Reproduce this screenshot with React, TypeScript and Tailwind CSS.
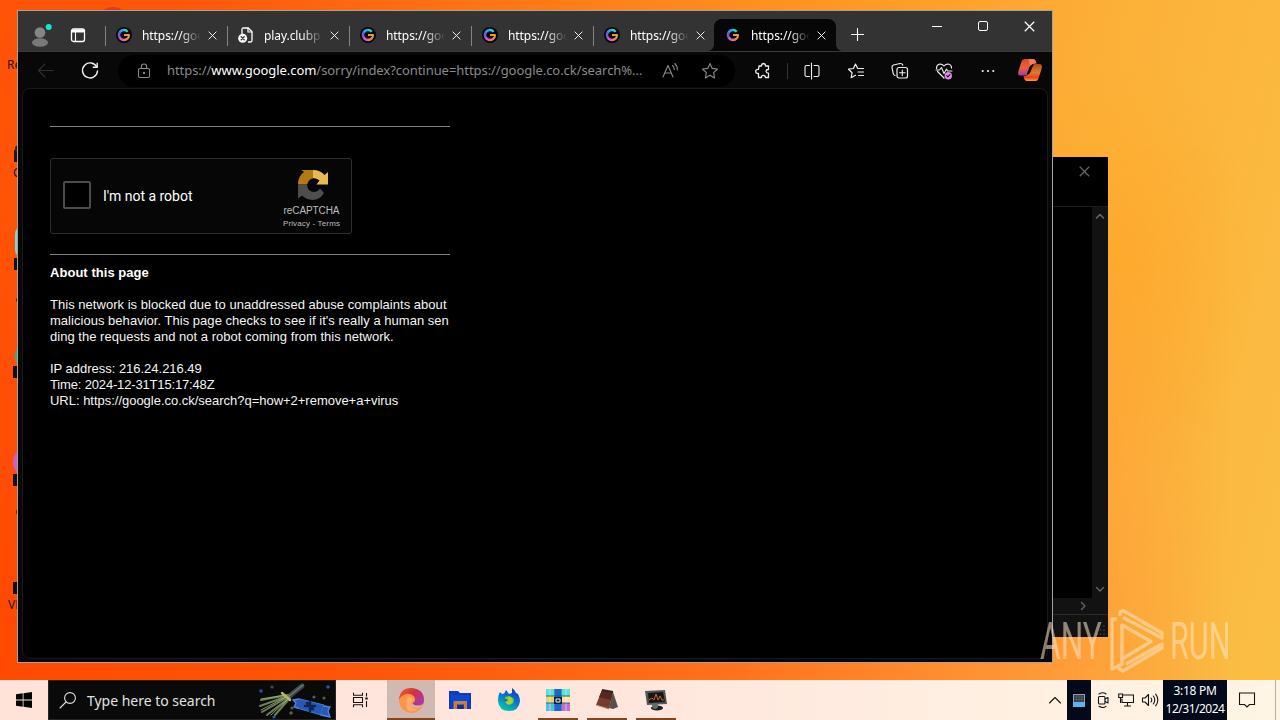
import type { ReactNode } from "react";
import clsx from "clsx";

const tabs = [
  { title: "https://goo", icon: "google" },
  { title: "play.clubp", icon: "file" },
  { title: "https://goo", icon: "google" },
  { title: "https://goo", icon: "google" },
  { title: "https://goo", icon: "google" },
];

function Icon({ size = 20, className, children }: { size?: number; className?: string; children: ReactNode }) {
  return (
    <svg
      width={size}
      height={size}
      viewBox={`0 0 ${size} ${size}`}
      fill="none"
      stroke="currentColor"
      strokeWidth="1.1"
      strokeLinecap="round"
      strokeLinejoin="round"
      className={clsx("shrink-0", className)}
    >
      {children}
    </svg>
  );
}

function GoogleIcon() {
  return (
    <Icon size={16}>
      <circle cx="8" cy="8" r="8" fill="#08060d" stroke="none" />
      <g strokeWidth="2.4" strokeLinecap="butt">
        <path d="M3.6 5.6A5 5 0 0 1 8 3" stroke="#2f9ff0" />
        <path d="M7.8 3a5 5 0 0 1 3.9 1.7" stroke="#35cfc4" />
        <path d="M3.7 10.5A5 5 0 0 1 3.7 5.4" stroke="#6a62dc" />
        <path d="M8.2 13A5 5 0 0 1 3.6 10.2" stroke="#dc5fc0" />
        <path d="M11.5 11.6A5 5 0 0 1 8 13" stroke="#ee7d6a" />
        <path d="M8 8h5a5 5 0 0 1-1.7 3.8" stroke="#e99a32" strokeWidth="2.1" />
      </g>
    </Icon>
  );
}

function FileIcon() {
  return (
    <Icon size={16} className="text-white">
      <path d="M4 6.500V2.600Q4 1 5.500 1h4.800L14 4.800v8.700Q14 15 12.500 15H10.500" strokeWidth="1.300" />
      <path d="M10 1.200V5h3.800" strokeWidth="1.200" />
      <circle cx="4.700" cy="11.200" r="4.500" fill="white" stroke="none" />
      <path d="M3.200 9.700l3 3m0-3l-3 3" stroke="#333" strokeWidth="1.300" />
    </Icon>
  );
}

function CloseIcon({ size = 10 }: { size?: number }) {
  return (
    <svg width={size} height={size} viewBox="0 0 10 10" stroke="currentColor" strokeWidth="1.100" className="shrink-0">
      <path d="M.7.7l8.600 8.600M9.300.7L.7 9.300" />
    </svg>
  );
}

function Tab({ title, icon, active }: { title: string; icon: string; active?: boolean }) {
  return (
    <div
      className={clsx(
        "relative flex h-8 w-[122px] shrink-0 items-center pl-[11px]",
        active && "-ml-px rounded-t-lg bg-[#070707]"
      )}
    >
      {active ? (
        <>
          <span className="absolute bottom-0 -left-1.5 size-1.5 bg-[radial-gradient(circle_at_0_0,#333_5.500px,#070707_6px)]" />
          <span className="absolute bottom-0 -right-1.5 size-1.5 bg-[radial-gradient(circle_at_100%_0,#333_5.500px,#070707_6px)]" />
        </>
      ) : (
        <span className="absolute left-0 top-[7px] h-5 w-px bg-[#858585]" />
      )}
      {icon === "google" ? <GoogleIcon /> : <FileIcon />}
      <span className="mt-px ml-2.5 w-[62px] whitespace-nowrap text-[12px] tracking-[-0.08px] text-white mask-[linear-gradient(90deg,#000_62%,transparent_95%)]">
        {title}
      </span>
      <span className="ml-1 flex text-[#eee]">
        <CloseIcon size={9} />
      </span>
    </div>
  );
}

function TabBar() {
  return (
    <div className="flex h-10 items-start bg-[#333]">
      <div className="flex h-10 w-[87px] items-center pt-2">
        <svg width="24" height="26" viewBox="0 0 24 26" className="-mt-[3px] ml-2.5">
          <circle cx="12" cy="11.500" r="5.300" fill="#858585" />
          <ellipse cx="12" cy="21.500" rx="8" ry="4.300" fill="#797979" />
          <circle cx="20.700" cy="6" r="3" fill="#12e6d2" />
        </svg>
        <Icon size={16} className="ml-[18px] text-white">
          <rect x="1.500" y="2" width="13" height="12.500" rx="2" strokeWidth="1.300" />
          <path d="M2 4h12" strokeWidth="3" strokeLinecap="butt" />
          <path d="M5.500 5v9" />
        </Icon>
      </div>
      <div className="flex pt-2">
        {tabs.map((tab, i) => (
          <Tab key={i} {...tab} />
        ))}
        <Tab title="https://goo" icon="google" active />
      </div>
      <div className="flex h-10 w-[42px] items-center justify-center pt-2 text-white">
        <Icon size={13} className="-mt-px">
          <path d="M6.500 .5v12M.5 6.500h12" />
        </Icon>
      </div>
      <div className="ml-auto flex h-[30px] text-white">
        <span className="flex w-[46px] items-center justify-center">
          <span className="h-px w-2.5 bg-white" />
        </span>
        <span className="flex w-[46px] items-center justify-center">
          <span className="size-2.5 rounded-[2px] border border-white" />
        </span>
        <span className="flex w-[46px] items-center justify-center">
          <CloseIcon size={11} />
        </span>
      </div>
    </div>
  );
}

function ToolButton({ className, children }: { className?: string; children: ReactNode }) {
  return <div className={clsx("flex w-11 shrink-0 justify-center text-[#eee]", className)}>{children}</div>;
}

const starPath = "M10 2.500l2.200 4.900 5.300.6-3.900 3.600 1 5.300L10 14.300l-4.600 2.600 1-5.300L2.500 8l5.300-.6z";

function Toolbar() {
  return (
    <div className="flex h-[37px] items-center border-t border-[#3a3a3a] bg-[#080808] pt-px">
      <ToolButton className="ml-1.5">
        <Icon className="text-[#303030]">
          <path d="M17.500 9.500H2.500M9 3L2.500 9.500 9 16" />
        </Icon>
      </ToolButton>
      <ToolButton>
        <Icon>
          <path d="M16.800 6.200A7.500 7.500 0 1 0 17.500 10" strokeWidth="1.400" />
          <path d="M17.200 2.300v4h-4" strokeWidth="1.400" />
        </Icon>
      </ToolButton>
      <div className="ml-1.5 flex h-8 w-[617px] shrink-0 items-center rounded-full bg-black text-[#8b8b8b]">
        <Icon size={16} className="ml-[18px]">
          <rect x="2.500" y="5.500" width="11" height="9" rx="1.500" />
          <path d="M5.300 5.500V3.700a2.700 2.700 0 0 1 5.400 0v1.800" />
          <circle cx="8" cy="10" r=".6" fill="currentColor" />
        </Icon>
        <span className="ml-[15px] w-[480px] whitespace-nowrap text-[13px] tracking-[-0.055px]">
          https://<span className="text-white">www.google.com</span>/sorry/index?continue=https://google.co.ck/search%...
        </span>
        <Icon size={18} className="ml-[14px]">
          <path d="M2 15L7 3.500 12 15M3.800 11h6.400M11.500 3.500q1.800 1.500 1.800 4M13.800 1.500q2.700 2.500 2.500 6.500" />
        </Icon>
        <Icon size={19} className="ml-[21px]">
          <path d={starPath} />
        </Icon>
      </div>
      <ToolButton className="ml-1.5">
        <Icon size={18}>
          <path
            d="M5 4h2.500Q7.300 1.700 9.500 1.500 11.700 1.700 11.500 4h3v3.500Q12.200 7.300 12 9.300q.2 2 2.500 1.900v4.300h-3Q11.300 13.300 9.300 13.300T7.500 15.500H4.500v-4Q1.700 11.500 1.700 9.400T4.500 7.300z"
            strokeWidth="1.300"
          />
        </Icon>
      </ToolButton>
      <span className="ml-0.5 h-4 w-px bg-[#333]" />
      <ToolButton className="ml-0.5">
        <Icon size={18}>
          <path d="M6.500 3.500h-3Q2 3.500 2 5v8q0 1.500 1.500 1.500h3M11 3.500h3.500Q16 3.500 16 5v8q0 1.500-1.500 1.500H11M8.500 1v16" />
        </Icon>
      </ToolButton>
      <ToolButton>
        <Icon>
          <path d="M9.500 14.200l-4.300 2.500.9-5L2.500 8.200l4.900-.7L9.500 3l2.200 4.500H17.500M12 11h5.500M12.500 14.500h5" strokeWidth="1.200" />
        </Icon>
      </ToolButton>
      <ToolButton>
        <Icon size={18}>
          <rect x="6" y="5.500" width="10.500" height="10.500" rx="2" strokeWidth="1.200" />
          <path d="M11.300 8v5.600M8.500 10.800h5.600" />
          <path d="M4 13.500Q2.500 13 2.200 11.500L1 5.500Q1 3.500 2.500 3L9 1.500q2.200-.2 2.800 1.700" strokeWidth="1.200" />
        </Icon>
      </ToolButton>
      <ToolButton>
        <Icon>
          <path d="M10 17L3.500 10.500M2.500 7.500Q2.500 3.500 6 3q2.500 0 4 2 1.500-2 4-2 3.500.5 3.500 4" strokeWidth="1.200" />
          <path d="M2 9h3.500L7.500 6.500l2.500 6L12.500 8l1 2H18" strokeWidth="1.100" />
          <circle cx="14.300" cy="14.700" r="3.700" fill="#e38ae8" stroke="none" />
          <path d="M12.700 14.700l1.200 1.200 2-2.300" stroke="#111" />
        </Icon>
      </ToolButton>
      <ToolButton>
        <Icon size={14}>
          <g fill="currentColor" stroke="none">
            <circle cx="1.700" cy="7" r="1.100" />
            <circle cx="7" cy="7" r="1.100" />
            <circle cx="12.300" cy="7" r="1.100" />
          </g>
        </Icon>
      </ToolButton>
      <ToolButton className="-ml-0.5">
        <svg width="26" height="24" viewBox="0 0 26 24" className="-mt-px shrink-0">
          <defs>
            <linearGradient id="cpA" x1="0" y1="0" x2="0" y2="1">
              <stop offset="0" stopColor="#dd4526" />
              <stop offset=".5" stopColor="#f0603a" />
              <stop offset="1" stopColor="#a83c96" />
            </linearGradient>
            <linearGradient id="cpB" x1="0" y1="0" x2="0" y2="1">
              <stop offset="0" stopColor="#b0481c" />
              <stop offset=".5" stopColor="#dd7c2c" />
              <stop offset=".8" stopColor="#f0401c" />
              <stop offset="1" stopColor="#ffa030" />
            </linearGradient>
          </defs>
          <path d="M7.500 1H16q2 0 2.700 2l.8 2.500Q15 5 14 8l-3.500 8q-.7 2-3 1.500H4Q.3 18 1.300 13.500L4.500 3.500Q5.300 1 7.500 1z" fill="url(#cpA)" />
          <path d="M18 6h4q4 0 2.700 4.500l-3.200 10Q20.700 23 18.500 23H10q-2.500 0-3-3l-.4-1.700q4.400-.3 6-4.300l2.700-6Q16 6 18 6z" fill="url(#cpB)" />
          <path d="M11.500 1H16q2 0 2.700 2l.8 2.500Q15 5 14 8l-1 1.500z" fill="#ff9a76" opacity=".6" />
          <path d="M12.500 9Q13.500 6 16.500 6.500L13.500 14Q12.500 17 9.500 16.500z" fill="#080808" />
        </svg>
      </ToolButton>
    </div>
  );
}

function RecaptchaLogo() {
  return (
    <svg width="32" height="32" viewBox="0 0 32 32" className="ml-0.5">
      <path d="M1 15.500Q1 7 7 3L4.500 1H16v8.500q-4 0-6 6z" fill="#b27a10" />
      <path d="M16 1q7 0 11.500 5L31 3v12.500H19.500l3-4Q20 9 16 9z" fill="#e6bc4e" />
      <path d="M1 15.500h9q.5 7 6.500 7.500 4 0 6.500-3.500l4 4.500Q23 31 15.500 31 9 30.500 5 26.500L1 29.500z" fill="#4e4e4e" />
    </svg>
  );
}

function SorryPage() {
  return (
    <div className="mx-1 mb-[3px] flex-1 rounded-lg border border-[#1a1a1c] bg-black px-[27px] pt-[37px] font-['Liberation_Sans',Arial,sans-serif] text-[13px] leading-4 text-[#f4f4f4]">
      <div className="w-[400px]">
        <hr className="border-[#808080]" />
        <div className="mt-[31px] flex h-[76px] w-[302px] rounded-[3px] border border-[#2d2d2d] bg-[#060606]">
          <div className="mt-[22px] ml-3 size-7 rounded-[2px] border-2 border-[#4c4c4c] bg-black" />
          <span className="mt-[29px] ml-3 font-[Roboto,sans-serif] text-[14px] leading-[17px] tracking-[-0.02px] text-white">
            I'm not a robot
          </span>
          <div className="mt-[10px] ml-auto mr-[11px] flex w-[57px] flex-col items-center whitespace-nowrap text-[#bdbdbd]">
            <RecaptchaLogo />
            <span className="mt-1 text-[10px] leading-3 tracking-[-0.1px]">reCAPTCHA</span>
            <span className="mt-px text-[8px] leading-3 tracking-[0.15px]">Privacy - Terms</span>
          </div>
        </div>
        <hr className="mt-5 border-[#808080]" />
        <p className="mt-[10px] font-bold tracking-[0.04px] text-white">About this page</p>
        <div className="mt-4 whitespace-nowrap">
          <p className="tracking-[0.03px]">This network is blocked due to unaddressed abuse complaints about</p>
          <p className="tracking-[0.03px]">malicious behavior. This page checks to see if it's really a human sen</p>
          <p className="tracking-[0.02px]">ding the requests and not a robot coming from this network.</p>
        </div>
        <div className="mt-4 whitespace-nowrap">
          <p className="tracking-[-0.02px]">IP address: 216.24.216.49</p>
          <p className="tracking-[-0.16px]">Time: 2024-12-31T15:17:48Z</p>
          <p className="tracking-[-0.02px]">URL: https://google.co.ck/search?q=how+2+remove+a+virus</p>
        </div>
      </div>
    </div>
  );
}

function BackWindow() {
  return (
    <div className="absolute left-[1040px] top-[157px] flex h-[480px] w-[68px] flex-col bg-black text-[#666]">
      <div className="flex h-[50px] justify-end border-b border-[#1c1c1c] pt-[9px] pr-[18px]">
        <CloseIcon size={11} />
      </div>
      <div className="flex h-[391px] justify-end">
        <div className="flex w-4 flex-col items-center justify-between bg-[#121212] pt-1 pb-1">
          <Icon size={10} className="-ml-px">
            <path d="M1.500 7L5 3.500 8.500 7" strokeWidth="1.600" />
          </Icon>
          <Icon size={10} className="-ml-px">
            <path d="M1.500 3.500L5 7l3.500-3.500" strokeWidth="1.300" />
          </Icon>
        </div>
      </div>
      <div className="flex h-4 items-center justify-end bg-[#121212] pr-5">
        <Icon size={10}>
          <path d="M3.500 1.500L7 5 3.500 8.500" strokeWidth="1.300" />
        </Icon>
      </div>
      <div className="flex flex-1 items-end justify-end border-t border-[#2a2a2a] bg-[#121212] p-0.5">
        <Icon size={10} className="text-[#555]">
          <path d="M8 1v0M8 5v0M8 9v0M4.500 5v0M4.500 9v0M1 9v0" strokeWidth="1.500" />
        </Icon>
      </div>
    </div>
  );
}

// Parts of desktop shortcuts that stick out left of the browser window
function DesktopShortcuts() {
  return (
    <div className="absolute inset-0 text-[12px] leading-4 text-[#2c1006]">
      <div className="absolute left-[99px] top-[7px] h-6 w-7 rounded-[50%] bg-[#dd3a20]" />
      <span className="absolute left-[7px] top-[57px]">Re</span>
      <span className="absolute left-[14px] top-[150px] h-3 w-3 bg-[#201510]" />
      <span className="absolute left-[15px] top-[145px] size-2 rounded-full bg-[#3a2016]" />
      <span className="absolute left-[13px] top-[165px]">C</span>
      <span className="absolute left-[15px] top-[226px] h-8 w-8 rounded-lg bg-[#6fe0dc]" />
      <span className="absolute left-[14px] top-[258px] size-3 bg-[#101010]" />
      <span className="absolute left-[15px] top-[340px] size-8 rounded-full bg-[#20b3a0]" />
      <span className="absolute left-[13px] top-[366px] size-3 bg-[#101010]" />
      <span className="absolute left-[16px] top-[298px] h-1 w-2 rounded-full bg-[#4a1a08]" />
      <span className="absolute left-[13px] top-[446px] size-8 rounded-full bg-[#c860c8]" />
      <span className="absolute left-[13px] top-[474px] size-3 bg-[#101010]" />
      <span className="absolute left-[16px] top-[509px] h-1.5 w-2 rounded-full bg-[#6a2508]" />
      <span className="absolute left-[13px] top-[582px] size-3 bg-[#101010]" />
      <span className="absolute left-2 top-[597px]">VL</span>
    </div>
  );
}

function Watermark() {
  return (
    <div className="absolute left-[1040px] top-[606px] flex h-[70px] w-[192px] items-center text-[#fbe6c4] opacity-55">
      <div className="w-[69px]">
        <span className="inline-block origin-left scale-x-[0.62] font-[Roboto,sans-serif] text-[51px] leading-none">ANY</span>
      </div>
      <svg
        width="56"
        height="66"
        viewBox="0 0 56 66"
        fill="none"
        stroke="currentColor"
        strokeWidth="3.400"
        className="shrink-0"
        strokeLinejoin="round"
      >
        <path d="M8 11H3v50l10-5V17l29 16.500L13 51" />
        <path d="M11 8V4l3-1.500 39 22.500v5L14 9.500" />
        <path d="M10 57v4l4 2 39-23v-4L17 56" />
      </svg>
      <div className="w-[60px] pl-[5px]">
        <span className="inline-block origin-left scale-x-[0.6] font-[Roboto,sans-serif] text-[51px] leading-none">RUN</span>
      </div>
    </div>
  );
}

function TaskbarButton({ open, active, children }: { open?: boolean; active?: boolean; children: ReactNode }) {
  return (
    <div className={clsx("relative flex h-10 w-12 items-center justify-center", active && "bg-[#cfb9b1]")}>
      {children}
      {(open || active) && (
        <span className={clsx("absolute bottom-0 h-0.5 bg-[#814620]", active ? "inset-x-0" : "inset-x-1")} />
      )}
    </div>
  );
}

function SearchArt() {
  return (
    <svg width="78" height="38" viewBox="0 0 78 38" fill="none" strokeLinecap="round">
      <path d="M30 17L45 5" stroke="#3a4446" strokeWidth="5" />
      <path d="M31 16L46 4" stroke="#6f7c78" strokeWidth="1.500" />
      <g stroke="#6d8058" strokeWidth="2">
        <path d="M31 14L4 19M31 15L3 25M31 16L5 31M32 17L10 34M33 17L18 34" />
      </g>
      <g stroke="#a9b984" strokeWidth=".8">
        <path d="M28 14L4 18M29 16L4 29M31 18L14 34" />
      </g>
      <path d="M25 12l8 7" stroke="#b9b760" strokeWidth="2.500" />
      <path d="M43 18l24 6-3 10-24-7z" fill="#2858b4" stroke="#3b78dd" />
      <path d="M42 18l-6 1 3 3-2 4 4 1M67 25l6 1-2 4 2 6-9-2" fill="#2858b4" stroke="#4f86dd" strokeWidth="1.300" />
      <path d="M53 21v9M48 25h10M50 22l6 6" stroke="#102450" strokeWidth="2.500" />
      <g stroke="none">
        <circle cx="4" cy="10" r="1.800" fill="#2e4f9c" />
        <circle cx="15" cy="6" r="1.600" fill="#4a4c42" />
        <circle cx="71" cy="6" r="1.800" fill="#2e56a8" />
        <circle cx="57" cy="16" r="1.600" fill="#58604a" />
        <circle cx="67" cy="17" r="1.600" fill="#62593a" />
        <circle cx="34" cy="32" r="1.800" fill="#57604a" />
        <circle cx="17" cy="36" r="1.600" fill="#2e56a8" />
        <circle cx="35" cy="27" r="1.500" fill="#526048" />
      </g>
    </svg>
  );
}

function EdgeLogo() {
  return (
    <svg width="25" height="25" viewBox="0 0 24 24">
      <defs>
        <linearGradient id="edge" x1="0" y1="0" x2="1" y2=".7">
          <stop offset="0" stopColor="#ee6a30" />
          <stop offset=".5" stopColor="#d2303c" />
          <stop offset="1" stopColor="#a43ab0" />
        </linearGradient>
      </defs>
      <circle cx="12" cy="12" r="12" fill="#ff9448" />
      <path d="M0 11Q1 0 12 0q12 1 12 11.500 0 5.500-6 5.500-4.500 0-5-2.500 2.500-1 2.500-4Q14.500 6 8.500 5.500 2.500 6 0 11z" fill="url(#edge)" />
      <path d="M13 14.500q.5 2.500 5 2.500 3.500 0 5-1.500l-2 2.500q-4 2-8 0-2-2 0-3.500z" fill="#cfb9b1" />
      <path d="M8.500 9q5-1 4.500 4-2.500 1-1.500 4 2 3.500 7 3-5 4-10 1-4-5 0-12z" fill="#ffb680" opacity=".7" />
    </svg>
  );
}

function Taskbar() {
  return (
    <div className="absolute inset-x-0 bottom-0 flex h-10 items-center bg-[linear-gradient(90deg,#ffe3d9,#ffe6dc_50%,#fff0e2_80%,#fff5e4)] text-[#151515]">
      <div className="flex w-12 justify-center">
        <svg width="16" height="16" viewBox="0 0 16 16">
          <path d="M0 2.300l6.700-1v6.300H0zM7.500 1.200L16 0v7.600H7.500zM0 8.400h6.700v6.300L0 13.800zM7.500 8.400H16V16l-8.500-1.200z" fill="#050505" />
        </svg>
      </div>
      <div className="flex h-10 w-[288px] items-center border border-[#262626] bg-[#0a0a0a] text-[#e2e2e2]">
        <Icon size={18} className="ml-[10px]">
          <circle cx="11" cy="7" r="5.400" />
          <path d="M7 11L1 17" />
        </Icon>
        <span className="ml-[10px] w-[172px] text-[14px] tracking-[-0.02px] whitespace-nowrap">Type here to search</span>
        <span className="-ml-px shrink-0">
          <SearchArt />
        </span>
      </div>
      <div className="flex w-[51px] pl-4">
        <Icon size={16}>
          <path d="M1.500.7v2.600h9V.7M1.500 15.300v-2.600h9v2.600M14.500 1v3.500M14.500 9v6" strokeLinecap="butt" />
          <rect x="1.500" y="5.500" width="9" height="5" />
          <path d="M14.500 5.500v2" strokeWidth="2.500" strokeLinecap="butt" />
        </Icon>
      </div>
      <div className="flex gap-px">
        <TaskbarButton active>
          <EdgeLogo />
        </TaskbarButton>
        <TaskbarButton>
          <svg width="22" height="20" viewBox="0 0 22 20">
            <path d="M0 1h9l2 2h11v16H0z" fill="#0c3dba" />
            <path d="M2 5h18v6H2z" fill="#0949cf" />
            <path d="M4.500 11h13.500v8h-3v-4.500H8V19H4.500z" fill="#c87c42" />
            <path d="M8.500 15h5.500v4H8.500z" fill="#0c318f" />
          </svg>
        </TaskbarButton>
        <TaskbarButton>
          <svg width="24" height="24" viewBox="0 0 24 24">
            <defs>
              <linearGradient id="fox" x1=".8" y1="0" x2=".3" y2="1">
                <stop offset="0" stopColor="#0f35ba" />
                <stop offset=".5" stopColor="#0877d4" />
                <stop offset="1" stopColor="#08c9a4" />
              </linearGradient>
            </defs>
            <path d="M3 4q1 2 3 2 2-1 3-4l3 4 3-1V0q3 2 4 5l2 1q2 4 2 7-1 10-11 10T1 13Q1 7 3 4z" fill="url(#fox)" />
            <path d="M8 9l4-1 4 2q2 4-1 6-4 2-6-1-2-3-1-6z" fill="#64cc38" />
            <path d="M8 12q3-1 4-3.500 4 1 3.500 5-1 3-4 3-3.500-1-3.500-4.500z" fill="#a8d428" />
            <path d="M6.500 10l5 2-3 2z" fill="#146cb8" />
          </svg>
        </TaskbarButton>
        <TaskbarButton open>
          <svg width="24" height="22" viewBox="0 0 24 22">
            <path d="M0 0h24v7H0z" fill="#37c5ae" />
            <path d="M0 7h24v7H0z" fill="#e5d26c" />
            <path d="M0 14h24v8H0z" fill="#bf6ed1" />
            <path d="M0 0h8v7H0zM16 0h8v7h-8z" fill="#58e1d4" />
            <path d="M0 14h8v8H0z" fill="#4ac2dc" />
            <path d="M16 8h8v6h-8z" fill="#f8e3a6" />
            <path d="M8.500 0h7v22h-7z" fill="#146ac8" />
            <path d="M4 0v22M20 0v22" stroke="#fff" strokeOpacity=".5" />
            <path d="M0 7h24M0 14h24" stroke="#1b5268" strokeWidth=".8" />
            <path d="M8 8h8v7H8z" fill="#10223a" />
            <path d="M10 10h4v3h-4z" fill="none" stroke="#eee" />
          </svg>
        </TaskbarButton>
        <TaskbarButton open>
          <svg width="24" height="22" viewBox="0 0 24 22">
            <path d="M14 19L18 3l5 15-5 2z" fill="#57504c" />
            <path d="M7 1l11 2-4 17L1 16z" fill="#743d2c" />
            <path d="M7 1l11 2-2 8L4 8z" fill="#54281e" />
            <path d="M7 1l11 2" stroke="#302520" strokeWidth="2" />
            <path d="M1 16l13 4" stroke="#c08f79" strokeWidth="1" />
          </svg>
        </TaskbarButton>
        <TaskbarButton open>
          <svg width="24" height="22" viewBox="0 0 24 22">
            <path d="M1 2l20-1 2 14-20 1z" fill="#555658" />
            <path d="M4 4l15-1 2 10-16 1z" fill="#1a1515" />
            <path d="M5 11l3-2 2 2 2-6 2 6 2-4 2 4h2" fill="none" stroke="#bb6240" />
            <ellipse cx="13" cy="19" rx="6" ry="2.500" fill="#1c1c1e" />
            <circle cx="11" cy="17" r="3" fill="#68696c" />
          </svg>
        </TaskbarButton>
      </div>
      <div className="ml-auto flex h-10 items-center">
        <Icon size={14} className="mr-[5px]">
          <path d="M1.500 10L7 4.500l5.500 5.500" />
        </Icon>
        <div className="flex h-10 w-6 items-center justify-center bg-[#020919]">
          <svg width="12" height="13" viewBox="0 0 12 13">
            <path d="M0 0h12v13H0z" fill="#8aa0b2" />
            <path d="M1 1h10v7H1z" fill="#333a42" />
            <path d="M1 3h10M1 5.500h10M3.500 1v7M6 1v7M8.500 1v7" stroke="#66717b" strokeWidth=".5" />
            <path d="M0 8h12v5H0z" fill="#58b4f4" />
          </svg>
        </div>
        <div className="flex w-[72px] items-center justify-around">
          <Icon size={16}>
            <rect x="3.500" y="4.500" width="6.500" height="7.500" rx="1" />
            <path d="M10 7l3-1.500v5.500L10 9.500M4 2Q8-.5 11 2M4 14.300q4 2.500 7 0" />
          </Icon>
          <Icon size={16}>
            <path d="M5.500 3h10v7.500H4V7M9.500 10.500V14M6.500 14h6M.7 2h3.800v3.500H.7zM2.500 5.500v5" strokeLinejoin="miter" />
          </Icon>
          <Icon size={18}>
            <path d="M1.500 7H4l3.500-3.500v11L4 11H1.500zM10 7q1.500 2 0 4M12.300 5q3 4 0 8M14.700 3.200q4.300 5.800 0 11.600" />
          </Icon>
        </div>
        <div className="flex h-10 w-16 flex-col items-center justify-center bg-[#020919] text-[12px] leading-[18px] text-white">
          <span className="tracking-[-0.3px]">3:18 PM</span>
          <span className="tracking-[-0.5px]">12/31/2024</span>
        </div>
        <div className="flex w-12 pl-[11px]">
          <Icon size={18}>
            <path d="M1.500 2h15v11.500h-5L9 16l-2.500-2.500h-5z" strokeLinejoin="miter" />
          </Icon>
        </div>
        <div className="h-10 w-[5px] border-l border-[#b9b0a5]" />
      </div>
    </div>
  );
}

export default function App() {
  return (
    <div className="relative h-[720px] w-[1280px] overflow-hidden bg-[radial-gradient(ellipse_140px_220px_at_1115px_270px,#ffa82499,transparent),linear-gradient(102deg,#ff5408_0%,#ff560a_12%,#ff7a16_38%,#ff9624_58%,#fcb038_78%,#fbbf46_100%)] font-['Noto_Sans',sans-serif]">
      <div className="absolute inset-0 bg-[linear-gradient(90deg,#ff4a04,#ff5608_30%,#ff7018_55%,#ff9a38_82%,transparent_96%)] mask-[linear-gradient(180deg,transparent_20%,#000_85%)]" />
      <DesktopShortcuts />
      <BackWindow />
      <div className="absolute left-[17px] top-[10px] flex h-[653px] w-[1036px] flex-col border border-[#a8a29c] bg-[#080808]">
        <TabBar />
        <Toolbar />
        <SorryPage />
      </div>
      <Watermark />
      <Taskbar />
    </div>
  );
}
